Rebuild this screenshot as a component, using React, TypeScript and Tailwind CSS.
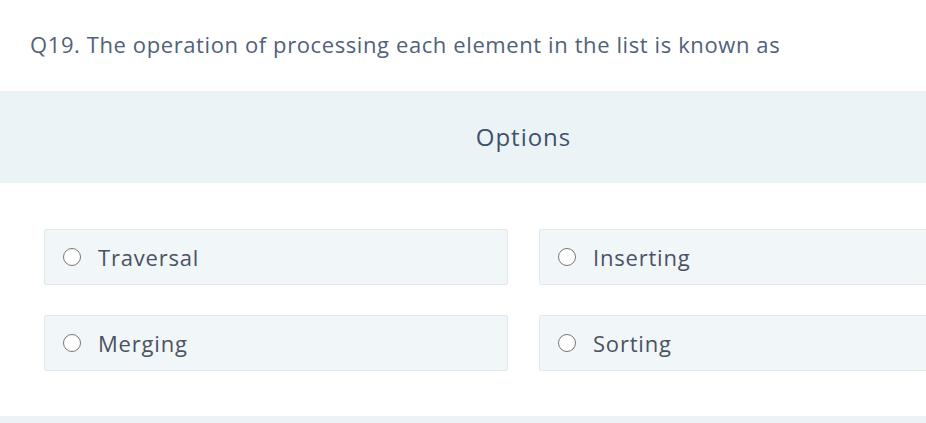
import React from "react";

const Radio = () => (
  <span className="inline-block w-[18px] h-[18px] rounded-full border border-[#767676] bg-white shrink-0" />
);

const Option = ({ label }: { label: string }) => (
  <div className="flex items-center h-[56px] bg-[#f1f6f8] border border-[#e2e8eb] rounded-[2px] pl-[18px] gap-[17px]">
    <Radio />
    <span className="text-[22px] text-[#4b5263] leading-none tracking-[0.8px]">{label}</span>
  </div>
);

export default function App() {
  return (
    <div className="w-[926px] h-[423px] overflow-hidden bg-white" style={{ fontFamily: "'Open Sans', 'Noto Sans', sans-serif" }}>
      <div className="w-[1047px]">
        <div className="pt-[30px] pl-[30px] h-[91px] text-[22px] text-[#4f627a] leading-[28px] tracking-[0.6px]">
          Q19. The operation of processing each element in the list is known as
        </div>
        <div className="h-[92px] bg-[#ecf3f7] flex items-center justify-center text-[24px] text-[#3c536b] tracking-[1px]">
          Options
        </div>
        <div className="px-[44px] pt-[46px] grid grid-cols-2 gap-x-[31px] gap-y-[30px]">
          <Option label="Traversal" />
          <Option label="Inserting" />
          <Option label="Merging" />
          <Option label="Sorting" />
        </div>
        <div className="mt-[45px] h-[20px] bg-[#ecf3f7]" />
      </div>
    </div>
  );
}
